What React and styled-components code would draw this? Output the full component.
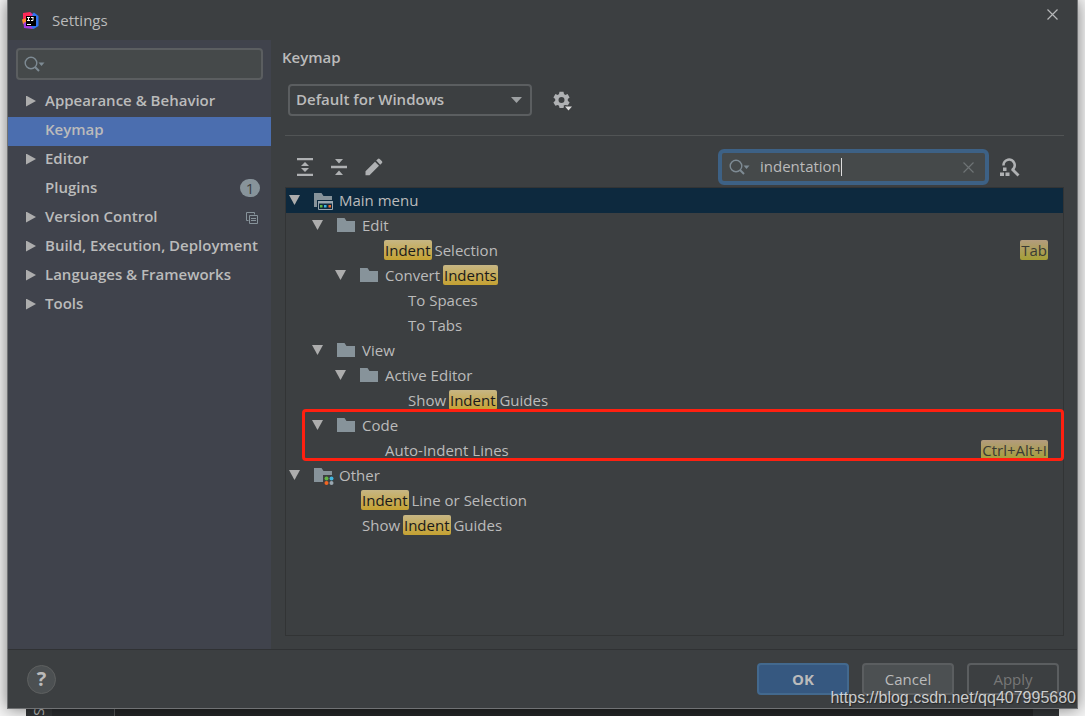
import React, { useState } from 'react'
import styled, { createGlobalStyle, css } from 'styled-components'

const categories = [
  { name: 'Appearance & Behavior', arrow: true },
  { name: 'Keymap' },
  { name: 'Editor', arrow: true },
  { name: 'Plugins', count: 1 },
  { name: 'Version Control', arrow: true, project: true },
  { name: 'Build, Execution, Deployment', arrow: true },
  { name: 'Languages & Frameworks', arrow: true },
  { name: 'Tools', arrow: true },
]

const actions = [
  {
    id: 'main',
    label: 'Main menu',
    icon: 'menu',
    children: [
      {
        id: 'edit',
        label: 'Edit',
        children: [
          { id: 'indent-selection', label: 'Indent Selection', hit: 'Indent', shortcut: 'Tab' },
          {
            id: 'convert',
            label: 'Convert Indents',
            hit: 'Indents',
            children: [
              { id: 'spaces', label: 'To Spaces' },
              { id: 'tabs', label: 'To Tabs' },
            ],
          },
        ],
      },
      {
        id: 'view',
        label: 'View',
        children: [
          {
            id: 'active-editor',
            label: 'Active Editor',
            children: [{ id: 'view-guides', label: 'Show Indent Guides', hit: 'Indent' }],
          },
        ],
      },
      {
        id: 'code',
        label: 'Code',
        marked: true,
        children: [{ id: 'auto-indent', label: 'Auto-Indent Lines', shortcut: 'Ctrl+Alt+I' }],
      },
    ],
  },
  {
    id: 'other',
    label: 'Other',
    icon: 'other',
    children: [
      { id: 'indent-line', label: 'Indent Line or Selection', hit: 'Indent' },
      { id: 'other-guides', label: 'Show Indent Guides', hit: 'Indent' },
    ],
  },
]

const Logo = () => (
  <svg width="17" height="17" viewBox="0 0 17 17" aria-hidden="true">
    <path d="M1 1 8 0l2 4-5 5-4 1z" fill="#fe2857" />
    <path d="M0 7.500 5 6v7l-4-1z" fill="#fc8a2c" />
    <path d="M8 3.500 12 .5l4.500 3.500v10l-5 3-4-2z" fill="#2f74f0" />
    <path d="M1.500 11 6 9l5 8-9-1z" fill="#a13be0" />
    <path d="M8 0l3 2.500L8 6z" fill="#e0338f" />
    <path d="M4 4h10v10H4z" fill="#000" />
    <path d="M5 5.500h3M6.500 5.500v3M5 8.500h3M9 5.500h2.500M11 5.500v3H9M5 12.500h4" stroke="#fff" strokeWidth="1" fill="none" />
  </svg>
)

const SearchIcon = () => (
  <svg width="21" height="16" viewBox="0 0 21 16" aria-hidden="true">
    <circle cx="7" cy="7" r="5.800" fill="none" stroke="#7e8b94" strokeWidth="1.400" />
    <path d="M11 11l4 4" stroke="#7e8b94" strokeWidth="2" />
    <path d="M14.500 6.500h6L17.500 10z" fill="#7e8b94" />
  </svg>
)

const ProjectIcon = () => (
  <svg width="12" height="12" viewBox="0 0 12 12" fill="none" stroke="#87939a" aria-hidden="true">
    <path d="M2.500 8.500h-2v-8h8v2" />
    <path d="M3.500 3.500h8v8h-8z" />
    <path d="M5 6.500h5M5 8.500h5" />
  </svg>
)

const GearIcon = () => (
  <svg width="20" height="22" viewBox="0 -2 20 22" aria-hidden="true">
    <path
      fill="#afb1b3"
      fillRule="evenodd"
      d="M6.500.8h4l.5 2.300 1.300.8 2.300-.8 2 3.400-1.800 1.600v1.700l1.800 1.600-2 3.400-2.300-.8-1.300.8-.5 2.300h-4L6 14.800 4.700 14l-2.300.8-2-3.400 1.800-1.600V8.100L.4 6.500l2-3.400 2.300.8L6 3.100zM8.500 6a3 3 0 1 0 0 6 3 3 0 0 0 0-6z"
    />
    <path d="M10.500 14.500h9.500v5h-5z" fill="#3c3f41" />
    <path d="M12 15.500h7L15.500 19.500z" fill="#dcdcdc" />
  </svg>
)

const ExpandIcon = () => (
  <svg width="16" height="18" viewBox="0 0 16 18" fill="#afb1b3" aria-hidden="true">
    <path d="M0 0h16v2.300H0zM0 15.700h16V18H0zM8 4l4 4H4zM4 10h8l-4 4z" />
  </svg>
)

const CollapseIcon = () => (
  <svg width="16" height="16" viewBox="0 0 16 16" fill="#afb1b3" aria-hidden="true">
    <path d="M0 6.800h16v2.400H0zM4 0h8L8 4.500zM8 11.500l4 4.500H4z" />
  </svg>
)

const PencilIcon = () => (
  <svg width="18" height="18" viewBox="0 0 18 18" fill="#afb1b3" aria-hidden="true">
    <path d="M.5 13.300 10 3.800l4 4-9.500 9.500h-4zM11.200 2.600l1.700-1.700q.9-.7 1.800 0l2.300 2.300q.7.9 0 1.800l-1.800 1.700z" />
  </svg>
)

const FindShortcutIcon = () => (
  <svg width="20" height="19" viewBox="0 0 20 19" aria-hidden="true">
    <path d="M3.500 7.500a5.600 5.600 0 1 1 8.500 4.500" fill="none" stroke="#afb1b3" strokeWidth="2.600" />
    <path d="M12 11l6.500 6.500" stroke="#afb1b3" strokeWidth="2.800" />
    <path d="M3 9.500h3.500V13H3zM0 14.500h4V18H0zM5.500 14.500h4V18h-4z" fill="#afb1b3" />
  </svg>
)

const CrossIcon = ({ color }) => (
  <svg width="11" height="11" viewBox="0 0 11 11" stroke={color} strokeWidth="1.200" aria-hidden="true">
    <path d="M.5.5l10 10M10.500.5l-10 10" />
  </svg>
)

const FolderIcon = ({ kind }) => (
  <svg width="20" height="20" viewBox="0 0 20 20" aria-hidden="true">
    <path d="M0 3h7.500l2 3H18v11H0z" fill="#87939a" />
    {kind === 'menu' && (
      <>
        <path d="M3 10h17v10H3z" fill="#0d293e" />
        <path d="M4.500 11.500h14v8h-14z" fill="none" stroke="#9aa7b0" />
        <path d="M4 11h15v2.500H4z" fill="#9aa7b0" />
        <path d="M6 15h2.500v2.500H6z" fill="#62b543" />
        <path d="M10 15h2.500v2.500H10z" fill="#40b6e0" />
        <path d="M14.500 15H17v2.500h-2.500z" fill="#f26522" />
      </>
    )}
    {kind === 'other' && (
      <>
        <path d="M9 10h11v10H9z" fill="#3c3f41" />
        <circle cx="12.500" cy="13.500" r="2" fill="#62b543" />
        <circle cx="17.500" cy="13.500" r="2" fill="#40b6e0" />
        <circle cx="12.500" cy="18" r="2" fill="#f26522" />
        <circle cx="17.500" cy="18" r="2" fill="#9aa7b0" />
      </>
    )}
  </svg>
)

const TreeLabel = ({ label, hit }) => {
  if (!hit) return <Label>{label}</Label>
  const [before, after] = label.split(hit)
  return (
    <Label>
      {before}
      <Hit>{hit}</Hit>
      {after}
    </Label>
  )
}

const TreeNode = ({ node, level, closed, toggle, selected, select }) => {
  const open = !closed.includes(node.id)
  return (
    <Node role="treeitem" aria-expanded={node.children ? open : undefined} aria-selected={selected === node.id}>
      <TreeRow $level={level} $active={selected === node.id} onClick={() => select(node.id)}>
        <Toggle $leaf={!node.children}>
          {node.children && (
            <ToggleButton aria-label={`Toggle ${node.label}`} onClick={() => toggle(node.id)}>
              <Triangle $down={open} />
            </ToggleButton>
          )}
        </Toggle>
        {node.children && <FolderIcon kind={node.icon} />}
        <TreeLabel label={node.label} hit={node.hit} />
        {node.shortcut && <Shortcut>{node.shortcut}</Shortcut>}
      </TreeRow>
      {node.children && open && (
        <Branch role="group">
          {node.children.map((child) => (
            <TreeNode
              key={child.id}
              node={child}
              level={child.children ? level + 1 : level + 2}
              closed={closed}
              toggle={toggle}
              selected={selected}
              select={select}
            />
          ))}
        </Branch>
      )}
      {node.marked && <Marker />}
    </Node>
  )
}

const App = () => {
  const [page, setPage] = useState('Keymap')
  const [query, setQuery] = useState('indentation')
  const [closed, setClosed] = useState([])
  const [selected, setSelected] = useState('main')

  const toggle = (id) =>
    setClosed((ids) => (ids.includes(id) ? ids.filter((i) => i !== id) : [...ids, id]))

  return (
    <>
      <GlobalStyle />
      <Desktop>
        <Dialog>
          <TitleBar>
            <Logo />
            <Title>Settings</Title>
            <CloseButton aria-label="Close">
              <CrossIcon color="#b5b7b8" />
            </CloseButton>
          </TitleBar>
          <Body>
            <Sidebar>
              <SideSearch>
                <SearchIcon />
                <SideInput aria-label="Search settings" />
              </SideSearch>
              <Categories>
                {categories.map((c) => (
                  <li key={c.name}>
                    <Category $active={page === c.name} onClick={() => setPage(c.name)}>
                      <Arrow>{c.arrow && <Triangle />}</Arrow>
                      <CategoryName>{c.name}</CategoryName>
                      {c.count && <Count>{c.count}</Count>}
                      {c.project && (
                        <ProjectMark>
                          <ProjectIcon />
                        </ProjectMark>
                      )}
                    </Category>
                  </li>
                ))}
              </Categories>
            </Sidebar>
            <Main>
              <Heading>Keymap</Heading>
              <SchemeRow>
                <SelectWrap>
                  <Scheme aria-label="Keymap scheme">
                    <option>Default for Windows</option>
                  </Scheme>
                  <SelectArrow />
                </SelectWrap>
                <IconButton aria-label="Scheme actions">
                  <GearIcon />
                </IconButton>
              </SchemeRow>
              <Toolbar>
                <Tools>
                  <IconButton aria-label="Expand all">
                    <ExpandIcon />
                  </IconButton>
                  <IconButton aria-label="Collapse all">
                    <CollapseIcon />
                  </IconButton>
                  <IconButton aria-label="Edit shortcut">
                    <PencilIcon />
                  </IconButton>
                </Tools>
                <ActionSearch>
                  <SearchIcon />
                  <ActionInput
                    aria-label="Search actions"
                    value={query}
                    onChange={(e) => setQuery(e.target.value)}
                  />
                  <Caret />
                  <ClearButton aria-label="Clear" onClick={() => setQuery('')}>
                    <CrossIcon color="#6e7375" />
                  </ClearButton>
                </ActionSearch>
                <IconButton aria-label="Find actions by shortcut">
                  <FindShortcutIcon />
                </IconButton>
              </Toolbar>
              <Tree role="tree">
                {actions.map((node) => (
                  <TreeNode
                    key={node.id}
                    node={node}
                    level={0}
                    closed={closed}
                    toggle={toggle}
                    selected={selected}
                    select={setSelected}
                  />
                ))}
              </Tree>
            </Main>
          </Body>
          <Footer>
            <Help aria-label="Help">?</Help>
            <Buttons>
              <Button $primary>OK</Button>
              <Button>Cancel</Button>
              <Button disabled>Apply</Button>
            </Buttons>
          </Footer>
        </Dialog>
        <Editor>
          <Stripe>
            <StripeText>S</StripeText>
          </Stripe>
          <Gutter />
          <Code />
          <Stripe />
        </Editor>
        <Watermark>https://blog.csdn.net/qq407995680</Watermark>
      </Desktop>
    </>
  )
}

export default App

const GlobalStyle = createGlobalStyle`
* {
  box-sizing: border-box;
}
body {
  margin: 0;
  background: #f6f6f6;
}
body, button, input, select {
  font-family: "Open Sans", "Noto Sans", sans-serif;
  font-size: 15px;
  color: #bbbbbb;
}
button {
  cursor: pointer;
}
ul {
  list-style: none;
  margin: 0;
  padding: 0;
}
svg {
  display: block;
  flex: none;
}
`
const Desktop = styled.div`
position: relative;
display: flex;
flex-direction: column;
height: 100vh;
overflow: hidden;
`
const Dialog = styled.div`
position: relative;
z-index: 1;
flex: 1;
min-height: 0;
display: flex;
flex-direction: column;
margin: 0 7px;
background: #3c3f41;
border: 1px solid #707274;
border-top: none;
box-shadow: 0 0 16px rgba(0,0,0,0.5);
`
const TitleBar = styled.header`
display: flex;
align-items: center;
height: 40px;
padding: 0 19px 0 14px;
`
const Title = styled.h1`
flex: 1;
margin: 0 0 0 13px;
font-size: 15px;
font-weight: 400;
`
const IconButton = styled.button`
display: flex;
align-items: center;
justify-content: center;
padding: 0;
border: none;
background: transparent;
`
const CloseButton = styled(IconButton)`
align-self: flex-start;
margin-top: 9px;
`
const Body = styled.div`
flex: 1;
min-height: 0;
display: flex;
`
const Sidebar = styled.nav`
flex: none;
width: 263px;
padding-top: 8px;
background: #40434c;
`
const SideSearch = styled.div`
display: flex;
align-items: center;
height: 32px;
margin: 0 8px 8px;
padding: 0 6px;
background: #45494a;
border: 2px solid #5b5e60;
border-radius: 4px;
`
const SideInput = styled.input`
flex: 1;
min-width: 0;
border: none;
outline: none;
background: transparent;
`
const Categories = styled.ul`
margin: 0;
`
const Category = styled.button`
display: flex;
align-items: center;
width: 100%;
height: 29px;
padding: 0 11px 3px 18px;
border: none;
font-weight: 600;
text-align: left;
white-space: nowrap;
background: ${(p) => (p.$active ? '#4b6eaf' : 'transparent')};
`
const Arrow = styled.span`
flex: none;
width: 19px;
`
const CategoryName = styled.span`
flex: 1;
min-width: 0;
padding-bottom: 2px;
`
const Triangle = styled.span`
display: block;
width: 10px;
height: 11px;
background: #adadad;
clip-path: polygon(0 0, 100% 50%, 0 100%);
${(p) =>
  p.$down &&
  css`
    width: 11px;
    height: 10px;
    clip-path: polygon(0 0, 100% 0, 50% 100%);
  `}
`
const ProjectMark = styled.span`
padding: 1px 2px 0 0;
`
const Count = styled.span`
display: flex;
align-items: center;
justify-content: center;
width: 20px;
height: 18px;
border-radius: 9px;
background: #87939a;
color: #3c3f41;
font-weight: 400;
`
const Main = styled.main`
flex: 1;
min-width: 0;
display: flex;
flex-direction: column;
padding: 5px 13px 13px 14px;
`
const Heading = styled.h2`
margin: 0 0 0 -3px;
font-size: 15px;
line-height: 24px;
font-weight: 600;
`
const SchemeRow = styled.div`
display: flex;
align-items: center;
gap: 21px;
padding: 15px 3px 19px;
border-bottom: 1px solid #515455;
`
const SelectWrap = styled.div`
display: grid;
align-items: center;
width: 244px;
`
const Scheme = styled.select`
grid-area: 1 / 1;
appearance: none;
width: 100%;
height: 32px;
padding: 0 30px 2px 6px;
border: 2px solid #5b5e60;
border-radius: 4px;
background: #3c3f41;
font-weight: 600;
`
const SelectArrow = styled.span`
grid-area: 1 / 1;
justify-self: end;
width: 11px;
height: 6px;
margin-right: 10px;
background: #9da0a2;
clip-path: polygon(0 0, 100% 0, 50% 100%);
pointer-events: none;
`
const Toolbar = styled.div`
display: flex;
align-items: center;
height: 51px;
padding: 13px 44px 2px 12px;
`
const Tools = styled.div`
flex: 1;
display: flex;
gap: 18px;
`
const ActionSearch = styled.div`
display: flex;
align-items: center;
width: 271px;
height: 36px;
margin-right: 11px;
padding: 0 11px 0 7px;
background: #45494a;
border: 4px solid #3d6185;
border-radius: 6px;
`
const ActionInput = styled.input`
field-sizing: content;
min-width: 4px;
max-width: 180px;
margin-left: 10px;
padding: 0 0 2px;
border: none;
outline: none;
background: transparent;
caret-color: transparent;
`
const Caret = styled.span`
width: 1px;
height: 18px;
background: #dddddd;
`
const ClearButton = styled(IconButton)`
margin-left: auto;
`
const Tree = styled.ul`
flex: 1;
min-height: 0;
border: 1px solid #323435;
`
const Branch = styled.ul`
margin: 0;
`
const Node = styled.li`
position: relative;
`
const TreeRow = styled.div`
display: flex;
align-items: center;
height: 25px;
padding: 0 15px 1px ${(p) => 3 + p.$level * 23}px;
white-space: nowrap;
background: ${(p) => (p.$active ? '#0d293e' : 'transparent')};
`
const Toggle = styled.span`
flex: none;
width: ${(p) => (p.$leaf ? 22 : 25)}px;
`
const ToggleButton = styled.button`
display: block;
padding: 0;
border: none;
background: transparent;
`
const Label = styled.span`
margin-left: 5px;
line-height: 20px;
white-space: pre;
`
const Hit = styled.mark`
display: inline-block;
margin: 0 -1px;
padding: 0 1px;
border-radius: 2px;
color: #1a1a1a;
background: linear-gradient(#c7b684, #c5a232);
`
const Shortcut = styled.kbd`
margin-left: auto;
margin-bottom: 1px;
padding: 0 1px;
border-radius: 2px;
font-family: inherit;
font-size: 15px;
line-height: 20px;
color: #3a3b34;
background: linear-gradient(#b39c7e, #a49f36);
`
const Marker = styled.div`
position: absolute;
top: -4px;
right: -1px;
bottom: 2px;
left: 16px;
border: 3px solid #ff2010;
border-radius: 4px;
pointer-events: none;
`
const Footer = styled.footer`
display: flex;
align-items: center;
justify-content: space-between;
height: 59px;
padding: 0 18px 0 19px;
border-top: 1px solid #303234;
`
const Help = styled.button`
width: 29px;
height: 29px;
padding: 0;
border: 1px solid #5e6060;
border-radius: 50%;
background: #4c5052;
font-size: 20px;
line-height: 24px;
font-weight: 700;
`
const Buttons = styled.div`
display: flex;
gap: 13px;
`
const Button = styled.button`
width: 92px;
height: 32px;
padding: 0;
border: 2px solid ${(p) => (p.$primary ? '#43698e' : '#5b5e60')};
border-radius: 4px;
background: ${(p) => (p.$primary ? '#365880' : '#4c5052')};
font-weight: ${(p) => (p.$primary ? 700 : 400)};
&:disabled {
  background: transparent;
  color: #777777;
}
`
const Editor = styled.div`
display: flex;
height: 7px;
margin: 0 26px;
background: #242526;
`
const Stripe = styled.div`
display: flex;
align-items: flex-end;
justify-content: center;
width: 26px;
background: #323436;
`
const StripeText = styled.span`
font-size: 14px;
line-height: 14px;
writing-mode: vertical-rl;
transform: rotate(180deg);
`
const Gutter = styled.div`
width: 63px;
background: #2a2c2e;
border-right: 1px solid #555555;
`
const Code = styled.div`
flex: 1;
`
const Watermark = styled.div`
position: absolute;
z-index: 2;
right: 9px;
bottom: 8px;
font-family: "Liberation Sans", sans-serif;
font-size: 16px;
line-height: 20px;
color: rgba(255,255,255,0.75);
text-shadow: 1px 1px 1px rgba(0,0,0,0.4);
pointer-events: none;
`
